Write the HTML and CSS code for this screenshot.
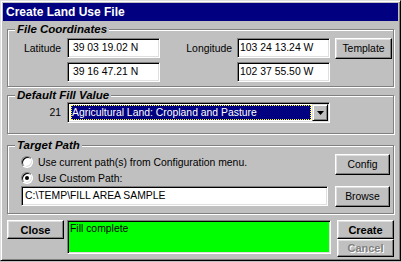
FILE: index.html
```html
<!DOCTYPE html>
<html lang="en">

<head>
    <meta charset="UTF-8">
    <title>Create Land Use File</title>
    <link rel="stylesheet" href="styles.css">
</head>

<body>
    <div class="window">
        <div class="titlebar">Create Land Use File</div>

        <div class="dialog">
            <!-- File Coordinates -->
            <div class="group coords">
                <span class="group-title">File Coordinates</span>
                <div class="coords-grid">
                    <span class="lbl">Latitude</span>
                    <div class="field">&nbsp;39 03 19.02 N</div>
                    <span class="lbl">Longitude</span>
                    <div class="field">103 24 13.24 W</div>
                    <div class="btn-cell"><button class="btn">Template</button></div>

                    <span class="lbl"></span>
                    <div class="field">&nbsp;39 16 47.21 N</div>
                    <span class="lbl"></span>
                    <div class="field">102 37 55.50 W</div>
                    <div class="btn-cell"></div>
                </div>
            </div>

            <!-- Default Fill Value -->
            <div class="group fill">
                <span class="group-title">Default Fill Value</span>
                <div class="fill-row">
                    <span class="lbl">21</span>
                    <div class="combo">
                        <div class="combo-value">Agricultural Land: Cropland and Pasture</div>
                        <div class="combo-arrow">
                            <svg width="7" height="4" viewBox="0 0 7 4"><path d="M0 0h7L3.5 4z" fill="#000"/></svg>
                        </div>
                    </div>
                </div>
            </div>

            <!-- Target Path -->
            <div class="group target">
                <span class="group-title">Target Path</span>
                <div class="target-grid">
                    <div class="radios">
                        <label class="radio-row"><span class="radio"></span>Use current path(s) from Configuration menu.</label>
                        <label class="radio-row"><span class="radio checked"></span>Use Custom Path:</label>
                    </div>
                    <div class="btn-cell"><button class="btn">Config</button></div>
                    <div class="field path">C:\TEMP\FILL AREA SAMPLE</div>
                    <div class="btn-cell"><button class="btn">Browse</button></div>
                </div>
            </div>

            <!-- Bottom row -->
            <div class="actions">
                <button class="btn bold close">Close</button>
                <div class="status">Fill complete</div>
                <div class="action-stack">
                    <button class="btn bold create">Create</button>
                    <button class="btn bold cancel" disabled>Cancel</button>
                </div>
            </div>
        </div>
    </div>
</body>

</html>
```

FILE: styles.css
```css
* {
    box-sizing: border-box;
    margin: 0;
    padding: 0;
}

html,
body {
    background-color: #c0c0c0;
}

body {
    font-family: "Liberation Sans", Arial, sans-serif;
    font-size: 10.4px;
    color: #000;
}

/* Window frame */
.window {
    width: 401px;
    height: 261px;
    background-color: #c0c0c0;
    border: 1px solid;
    border-color: #dfdfdf #000 #000 #dfdfdf;
    box-shadow: inset 1px 1px #fff, inset -1px -1px #808080;
    padding: 2px;
    display: flex;
    flex-direction: column;
}

.titlebar {
    height: 18px;
    line-height: 18px;
    background-color: #000080;
    color: #fff;
    font-weight: bold;
    font-size: 12px;
    padding-left: 3px;
}

.dialog {
    padding: 8px 4px 1px 4px;
    display: flex;
    flex-direction: column;
}

/* Group boxes */
.group {
    position: relative;
    border: 1px solid #808080;
    box-shadow: inset 1px 1px #fff, 1px 1px #fff;
}

.group-title {
    position: absolute;
    top: -8px;
    left: 7px;
    padding: 0 2px;
    line-height: 14px;
    background-color: #c0c0c0;
    font-weight: bold;
    font-style: italic;
    font-size: 11.5px;
}

.lbl {
    text-align: right;
    padding-right: 6px;
    white-space: nowrap;
}

/* Sunken edit field */
.field {
    height: 20px;
    line-height: 16px;
    background-color: #fff;
    border: 1px solid;
    border-color: #808080 #fff #fff #808080;
    box-shadow: inset 1px 1px #000, inset -1px -1px #dfdfdf;
    padding: 1px 2px;
    white-space: nowrap;
    overflow: hidden;
}

/* Raised button */
.btn {
    font-family: inherit;
    font-size: 10.4px;
    color: #000;
    background-color: #c0c0c0;
    border: 1px solid;
    border-color: #fff #000 #000 #fff;
    box-shadow: inset -1px -1px #808080, inset 1px 1px #dfdfdf;
    width: 57px;
    height: 21px;
    cursor: pointer;
}

.btn.bold {
    font-weight: bold;
    font-size: 11px;
}

.btn-cell {
    display: flex;
    align-items: flex-start;
    padding-left: 5px;
}

/* File coordinates */
.coords {
    padding: 8px 0 4px 0;
}

.coords-grid {
    display: grid;
    grid-template-columns: 59px 93px 77px 93px 62px;
    grid-template-rows: 20px 20px;
    row-gap: 4px;
    align-items: center;
}

.coords-grid .lbl:nth-of-type(2) {
    padding-right: 5px;
}

.coords-grid .btn-cell {
    align-self: start;
}

/* Default fill value */
.fill {
    margin-top: 8px;
    padding: 6px 0 10px 0;
}

.fill-row {
    display: grid;
    grid-template-columns: 59px 263px;
    align-items: center;
}

.combo {
    height: 21px;
    display: flex;
    background-color: #fff;
    border: 1px solid;
    border-color: #808080 #fff #fff #808080;
    box-shadow: inset 1px 1px #000, inset -1px -1px #dfdfdf;
    padding: 1px;
}

.combo-value {
    flex: 1;
    margin: 1px 1px 1px 2px;
    background-color: #000080;
    color: #fff;
    outline: 1px dotted #ffff00;
    outline-offset: -1px;
    line-height: 15px;
    padding-left: 1px;
    white-space: nowrap;
    overflow: hidden;
}

.combo-arrow {
    width: 16px;
    height: 17px;
    display: flex;
    align-items: center;
    justify-content: center;
    background-color: #c0c0c0;
    border: 1px solid;
    border-color: #dfdfdf #000 #000 #dfdfdf;
    box-shadow: inset 1px 1px #fff, inset -1px -1px #808080;
}

/* Target path */
.target {
    margin-top: 11px;
    padding: 8px 0 6px 13px;
}

.target-grid {
    display: grid;
    grid-template-columns: 307px 62px;
    grid-template-rows: 32px 21px;
}

.radios {
    display: flex;
    flex-direction: column;
}

.radio-row {
    height: 16px;
    display: flex;
    align-items: center;
    gap: 5px;
    white-space: nowrap;
}

.radio {
    position: relative;
    width: 12px;
    height: 12px;
    border-radius: 50%;
    background-color: #fff;
    border: 1px solid;
    border-color: #808080 #fff #fff #808080;
    box-shadow: inset 1px 1px #000, inset -1px -1px #dfdfdf;
    flex-shrink: 0;
}

.radio.checked::after {
    content: "";
    position: absolute;
    left: 3px;
    top: 3px;
    width: 4px;
    height: 4px;
    border-radius: 50%;
    background-color: #000;
}

.field.path {
    padding-left: 3px;
}

.target-grid .btn-cell {
    padding-left: 7px;
}

/* Bottom actions */
.actions {
    margin-top: 6px;
    display: flex;
    align-items: flex-start;
}

.close {
    height: 19px;
}

.status {
    width: 264px;
    height: 34px;
    margin: 0 6px 0 3px;
    background-color: #00ff00;
    border: 1px solid;
    border-color: #808080 #fff #fff #808080;
    box-shadow: inset 1px 1px #000, inset -1px -1px #dfdfdf;
    padding: 1px 2px;
    line-height: 14px;
}

.action-stack {
    display: flex;
    flex-direction: column;
}

.create {
    height: 19px;
}

.cancel {
    height: 18px;
    color: #808080;
    text-shadow: 1px 1px 0 #fff;
    cursor: default;
}
```
